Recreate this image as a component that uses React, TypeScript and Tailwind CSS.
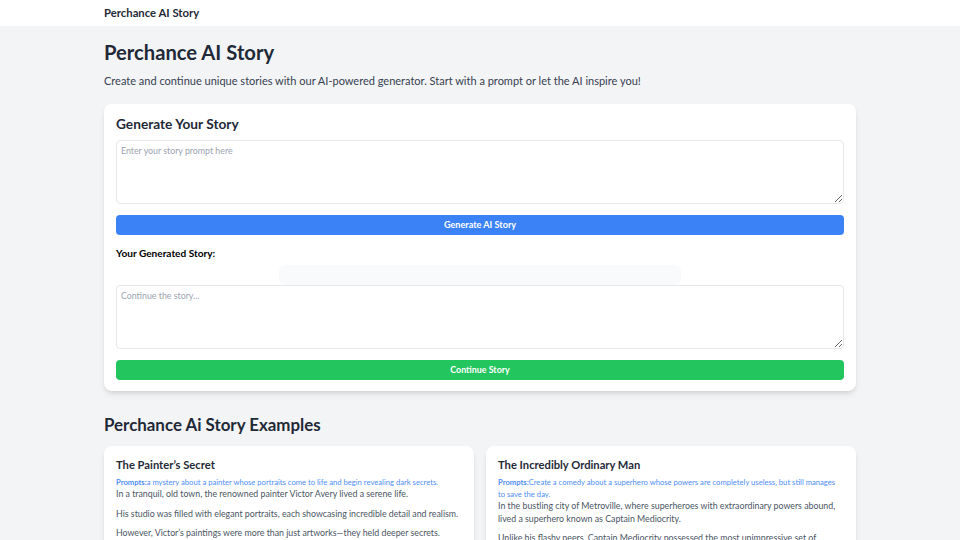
import React from "react";

const font = { fontFamily: 'Lato, "Noto Sans", sans-serif' };

export default function App() {
  return (
    <div className="min-h-[540px] bg-[#f3f4f6] text-[#1f2937]" style={font}>
      <header className="bg-white h-[26px] flex items-center">
        <div className="w-[752px] mx-auto text-[11.3px] font-bold text-[#1f2937]">Perchance AI Story</div>
      </header>
      <main className="w-[752px] mx-auto pt-[13px]">
        <h1 className="text-[20.2px] font-bold text-[#1f2937] leading-[26px]">Perchance AI Story</h1>
        <p className="text-[11px] text-[#374151] mt-[8px] leading-[16px]">
          Create and continue unique stories with our AI-powered generator. Start with a prompt or let the AI inspire you!
        </p>
        <section className="bg-white rounded-lg shadow-md mt-[15px] p-3 pb-[11px]">
          <h2 className="text-[13.7px] font-bold leading-[20px] -mt-[2px]">Generate Your Story</h2>
          <textarea
            className="block w-full h-[64px] mt-[6px] border border-[#e5e7eb] rounded-sm px-[4px] py-[3px] text-[8.8px] placeholder:text-[#9ca3af] outline-none"
            placeholder="Enter your story prompt here"
          />
          <button className="w-full h-[20px] mt-[11px] bg-[#3b82f6] text-white text-[9.1px] font-bold rounded-sm">Generate AI Story</button>
          <div className="text-[10.1px] font-bold text-black mt-[11px] leading-[14px]">Your Generated Story:</div>
          <div className="w-[402px] h-[20px] mx-auto mt-[5px] bg-[#f9fafb] rounded-md" />
          <textarea
            className="block w-full h-[64px] border border-[#e5e7eb] rounded-sm px-[4px] py-[3px] text-[8.8px] placeholder:text-[#9ca3af] outline-none"
            placeholder="Continue the story..."
          />
          <button className="w-full h-[20px] mt-[11px] bg-[#22c55e] text-white text-[8.9px] font-bold rounded-sm">Continue Story</button>
        </section>
        <h2 className="text-[16.9px] font-bold mt-[23px] leading-[22px]">Perchance Ai Story Examples</h2>
        <div className="grid grid-cols-2 gap-3 mt-[10px]">
          <div className="bg-white rounded-lg shadow-md p-3 pt-[11px]">
            <h3 className="text-[11.2px] font-bold leading-[16px]">The Painter’s Secret</h3>
            <p className="text-[7.65px] text-[#3b82f6] mt-[3px] leading-[12px] opacity-90">
              <span className="font-bold">Prompts:</span>a mystery about a painter whose portraits come to life and begin revealing dark secrets.
            </p>
            <p className="text-[8.8px] text-[#4b5563] leading-[12.5px]">In a tranquil, old town, the renowned painter Victor Avery lived a serene life.</p>
            <p className="text-[8.8px] text-[#4b5563] leading-[12.5px] mt-[7px]">His studio was filled with elegant portraits, each showcasing incredible detail and realism.</p>
            <p className="text-[8.8px] text-[#4b5563] leading-[12.5px] mt-[7px]">However, Victor’s paintings were more than just artworks—they held deeper secrets.</p>
          </div>
          <div className="bg-white rounded-lg shadow-md p-3 pt-[11px]">
            <h3 className="text-[11.2px] font-bold leading-[16px]">The Incredibly Ordinary Man</h3>
            <p className="text-[7.65px] text-[#3b82f6] mt-[3px] leading-[12px] opacity-90">
              <span className="font-bold">Prompts:</span>Create a comedy about a superhero whose powers are completely useless, but still manages to save the day.
            </p>
            <p className="text-[8.8px] text-[#4b5563] leading-[12.5px]">In the bustling city of Metroville, where superheroes with extraordinary powers abound, lived a superhero known as Captain Mediocrity.</p>
            <p className="text-[8.8px] text-[#4b5563] leading-[12.5px] mt-[7px]">Unlike his flashy peers, Captain Mediocrity possessed the most unimpressive set of abilities.</p>
          </div>
        </div>
      </main>
    </div>
  );
}
